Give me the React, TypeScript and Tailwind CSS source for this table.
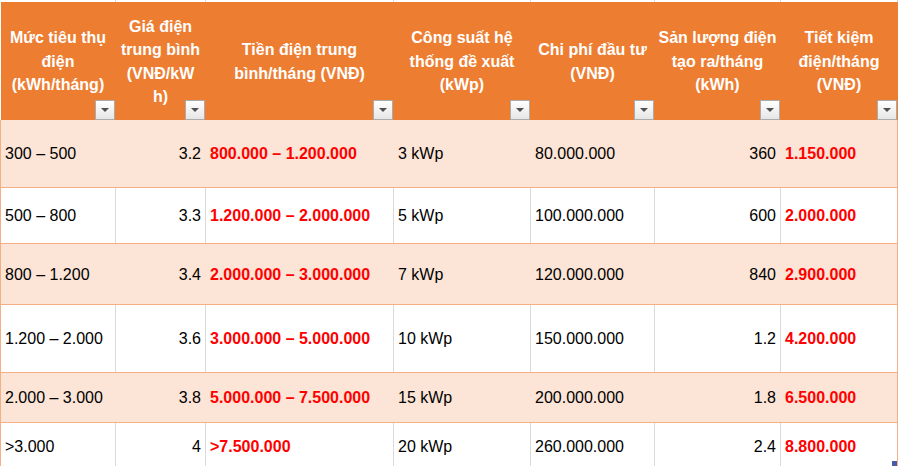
const widths = ["w-[115px]", "w-[90px]", "w-[188px]", "w-[137px]", "w-[124px]", "w-[126px]", "w-[117px]"];

const headers: string[][] = [
  ["Mức tiêu thụ", "điện", "(kWh/tháng)"],
  ["Giá điện", "trung bình", "(VNĐ/kW", "h)"],
  ["Tiền điện trung", "bình/tháng (VNĐ)"],
  ["Công suất hệ", "thống đề xuất", "(kWp)"],
  ["Chi phí đầu tư", "(VNĐ)"],
  ["Sản lượng điện", "tạo ra/tháng", "(kWh)"],
  ["Tiết kiệm", "điện/tháng", "(VNĐ)"],
];

type Row = { cells: string[]; band: boolean; h: string };

const rows: Row[] = [
  { cells: ["300 – 500", "3.2", "800.000 – 1.200.000", "3 kWp", "80.000.000", "360", "1.150.000"], band: true, h: "h-[67px]" },
  { cells: ["500 – 800", "3.3", "1.200.000 – 2.000.000", "5 kWp", "100.000.000", "600", "2.000.000"], band: false, h: "h-[55px]" },
  { cells: ["800 – 1.200", "3.4", "2.000.000 – 3.000.000", "7 kWp", "120.000.000", "840", "2.900.000"], band: true, h: "h-[60px]" },
  { cells: ["1.200 – 2.000", "3.6", "3.000.000 – 5.000.000", "10 kWp", "150.000.000", "1.2", "4.200.000"], band: false, h: "h-[67px]" },
  { cells: ["2.000 – 3.000", "3.8", "5.000.000 – 7.500.000", "15 kWp", "200.000.000", "1.8", "6.500.000"], band: true, h: "h-[49px]" },
  { cells: [">3.000", "4", ">7.500.000", "20 kWp", "260.000.000", "2.4", "8.800.000"], band: false, h: "h-[47px]" },
];

function FilterButton() {
  return (
    <div className="absolute right-0 bottom-0 w-[20px] h-[20px] border border-[#ababab] bg-gradient-to-b from-white to-[#e6e6e6] flex items-center justify-center">
      <svg width="8" height="4" viewBox="0 0 8 4">
        <path d="M0 0h8L4 4z" fill="#505050" />
      </svg>
    </div>
  );
}

function DataCell({ text, col, band }: { text: string; col: number; band: boolean }) {
  const right = col === 1 || col === 5;
  const red = col === 2 || col === 6;
  const last = col === 6;
  return (
    <div
      className={`${widths[col]} shrink-0 h-full flex items-center px-[4px] pt-px border-r ${
        last ? "border-[#f4b084]" : band ? "border-[#fce4d6]" : "border-[#dadada]"
      } ${right ? "justify-end" : "justify-start"} ${red ? "text-[#ff0000] font-bold" : "text-black"}`}
    >
      <span className="whitespace-nowrap">{text}</span>
    </div>
  );
}

export default function App() {
  return (
    <div className="w-[901px] h-[466px] overflow-hidden bg-white relative font-['Liberation_Sans',Arial,sans-serif] text-[16px]">
      {/* strip of the sheet row above */}
      <div className="flex h-[2px] pl-px">
        {widths.map((w, i) => (
          <div key={i} className={`${w} shrink-0 h-full border-r border-[#d9d9d9]`} />
        ))}
      </div>

      {/* header */}
      <div className="flex w-[898px] h-[118px] bg-[#ed7d31] border-l border-white">
        {headers.map((lines, i) => (
          <div
            key={i}
            className={`${widths[i]} shrink-0 h-full relative flex items-center justify-center border-r border-[#ed7d31] text-white font-bold text-center leading-[23.5px]`}
          >
            <div className="pt-px">
              {lines.map((l, j) => (
                <div key={j} className="whitespace-nowrap">
                  {l}
                </div>
              ))}
            </div>
            <FilterButton />
          </div>
        ))}
      </div>

      {/* body */}
      {rows.map((r, i) => (
        <div
          key={i}
          className={`flex w-[898px] border-l border-[#f4b084] ${
            r.band ? `bg-[#fce4d6] border-b border-[#f4b084] ${i > 0 ? "border-t" : ""}` : "bg-white"
          }`}
        >
          <div className={`flex ${r.h}`}>
            {r.cells.map((c, j) => (
              <DataCell key={j} text={c} col={j} band={r.band} />
            ))}
          </div>
        </div>
      ))}

      {/* table resize handle */}
      <div className="absolute left-[892px] top-[461px] w-[5px] h-[5px] bg-[#4a5aa8]" />
    </div>
  );
}
